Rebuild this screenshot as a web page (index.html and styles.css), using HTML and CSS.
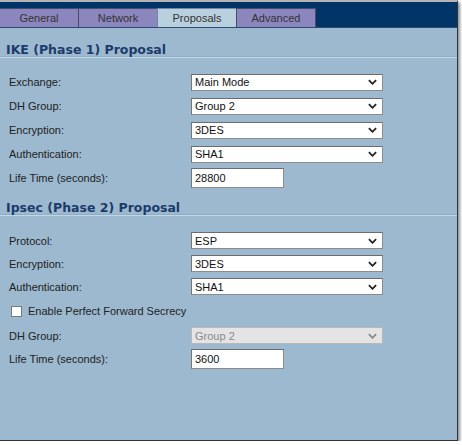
FILE: index.html
```html
<!DOCTYPE html>
<html lang="en">
<head>
    <meta charset="UTF-8">
    <meta name="viewport" content="width=device-width, initial-scale=1.0">
    <title>VPN Proposals</title>
    <link rel="stylesheet" href="styles.css">
</head>
<body>
    <div class="window">
        <div class="tabs">
            <div class="tab">General</div>
            <div class="tab">Network</div>
            <div class="tab active">Proposals</div>
            <div class="tab">Advanced</div>
        </div>

        <div class="content">
            <h2 class="section-title first">IKE (Phase 1) Proposal</h2>
            <div class="rows">
                <div class="row">
                    <label for="ikeExchange">Exchange:</label>
                    <select id="ikeExchange"><option>Main Mode</option><option>Aggressive Mode</option></select>
                </div>
                <div class="row">
                    <label for="ikeDh">DH Group:</label>
                    <select id="ikeDh"><option>Group 2</option><option>Group 1</option><option>Group 5</option></select>
                </div>
                <div class="row">
                    <label for="ikeEnc">Encryption:</label>
                    <select id="ikeEnc"><option>3DES</option><option>DES</option><option>AES-128</option></select>
                </div>
                <div class="row">
                    <label for="ikeAuth">Authentication:</label>
                    <select id="ikeAuth"><option>SHA1</option><option>MD5</option></select>
                </div>
                <div class="row">
                    <label for="ikeLife">Life Time (seconds):</label>
                    <input type="text" id="ikeLife" value="28800">
                </div>
            </div>

            <h2 class="section-title">Ipsec (Phase 2) Proposal</h2>
            <div class="rows tight">
                <div class="row">
                    <label for="ipsecProto">Protocol:</label>
                    <select id="ipsecProto"><option>ESP</option><option>AH</option></select>
                </div>
                <div class="row">
                    <label for="ipsecEnc">Encryption:</label>
                    <select id="ipsecEnc"><option>3DES</option><option>DES</option><option>AES-128</option></select>
                </div>
                <div class="row">
                    <label for="ipsecAuth">Authentication:</label>
                    <select id="ipsecAuth"><option>SHA1</option><option>MD5</option></select>
                </div>
                <div class="check-row">
                    <label><input type="checkbox" id="pfs"> Enable Perfect Forward Secrecy</label>
                </div>
                <div class="row">
                    <label for="ipsecDh">DH Group:</label>
                    <select id="ipsecDh" disabled><option>Group 2</option></select>
                </div>
                <div class="row">
                    <label for="ipsecLife">Life Time (seconds):</label>
                    <input type="text" id="ipsecLife" value="3600">
                </div>
            </div>
        </div>
    </div>

    <script>
        document.getElementById('pfs').addEventListener('change', function () {
            document.getElementById('ipsecDh').disabled = !this.checked;
        });
    </script>
</body>
</html>
```

FILE: styles.css
```css
body {
    margin: 0;
    background-color: #fff;
    font-family: "Liberation Sans", Arial, sans-serif;
    font-size: 11px;
    color: #222;
}
.window {
    width: 457px;
    border-top: 2px solid #b4b4b4;
    border-right: 1px solid #333;
    border-bottom: 1px solid #333;
    box-shadow: 2px 2px 3px rgba(0, 0, 0, 0.45);
}
.tabs {
    display: flex;
    height: 26px;
    box-sizing: border-box;
    padding-top: 6px;
    background-color: #003366;
    border-bottom: 1px solid #2a4c70;
}
.tab {
    width: 80px;
    box-sizing: border-box;
    margin-left: -1px;
    border: 1px solid #4a4a6c;
    border-bottom: none;
    background-color: #8c86be;
    color: #333;
    text-align: center;
    line-height: 18px;
}
.tab:first-child {
    margin-left: 0;
    width: 79px;
    border-left: none;
}
.tab.active {
    background-color: #b9d1de;
    border-color: #6f8aa6;
}
.content {
    height: 412px;
    background-color: #9cb9cf;
    overflow: hidden;
}
.section-title {
    margin: 10px 0 0;
    padding: 0 6px;
    font-family: "DejaVu Sans", Verdana, sans-serif;
    font-size: 12.5px;
    font-weight: bold;
    line-height: 15px;
    color: #1c3b6b;
    border-bottom: 1px solid #c3d6e3;
    box-shadow: 0 -1px 0 #8eaec4 inset;
}
.section-title.first {
    margin-top: 14px;
}
.rows {
    margin-top: 12px;
}
.rows.tight {
    margin-top: 13px;
}
.row {
    display: grid;
    grid-template-columns: 182px 192px;
    align-items: center;
    height: 24px;
    padding-left: 9px;
}
.tight .row {
    height: 23px;
}
.check-row {
    display: flex;
    align-items: center;
    height: 26px;
    padding-left: 11px;
}
.check-row label {
    display: flex;
    align-items: center;
    gap: 6px;
}
input[type="checkbox"] {
    appearance: none;
    width: 11px;
    height: 11px;
    margin: 0;
    background-color: #fff;
    border: 1px solid #7a7a7a;
}
select, input[type="text"] {
    box-sizing: border-box;
    font-family: "Liberation Sans", Arial, sans-serif;
    font-size: 11px;
    color: #111;
    background-color: #fff;
    border: 1px solid #8c8c8c;
    border-top-color: #6c6c6c;
    border-left-color: #767676;
    border-radius: 0;
    margin: 0;
}
select {
    appearance: none;
    height: 17px;
    padding: 0 3px;
    background-image: url("data:image/svg+xml,%3Csvg xmlns='http://www.w3.org/2000/svg' viewBox='0 0 10 6'%3E%3Cpath d='M1 1l4 4 4-4' fill='none' stroke='%23222' stroke-width='2'/%3E%3C/svg%3E");
    background-repeat: no-repeat;
    background-position: right 5px center;
    background-size: 9px 6px;
}
select:disabled {
    background-color: #e4e4e4;
    border-color: #b8b8b8;
    color: #8a8a8a;
    opacity: 1;
    background-image: url("data:image/svg+xml,%3Csvg xmlns='http://www.w3.org/2000/svg' viewBox='0 0 10 6'%3E%3Cpath d='M1 1l4 4 4-4' fill='none' stroke='%23888' stroke-width='2'/%3E%3C/svg%3E");
}
input[type="text"] {
    width: 93px;
    height: 20px;
    padding: 0 3px;
}
```
